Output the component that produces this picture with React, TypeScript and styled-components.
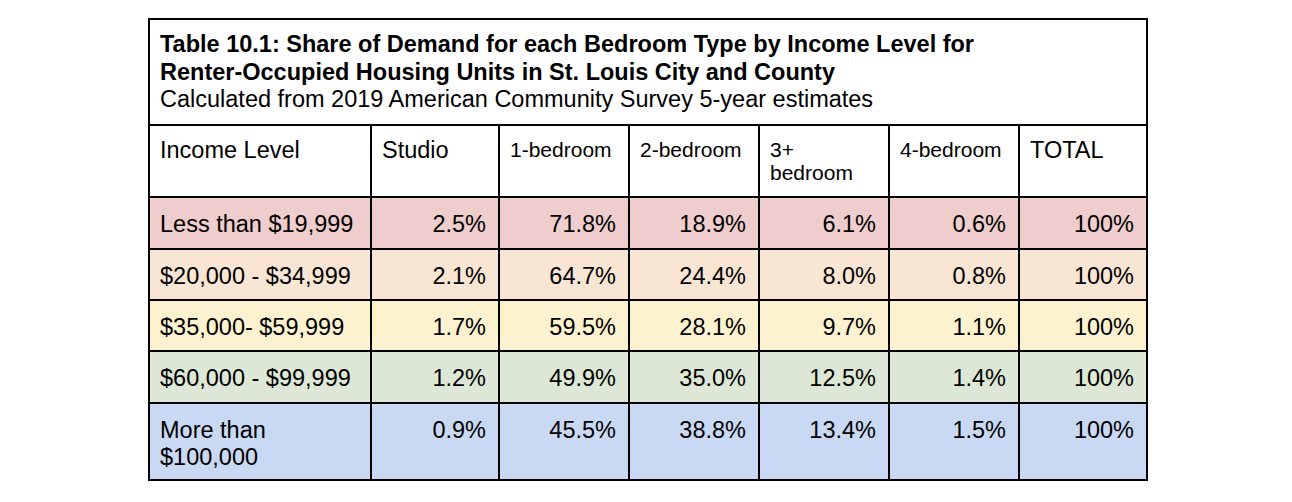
import React from "react";
import styled, { createGlobalStyle } from "styled-components";

const GlobalStyle = createGlobalStyle`
  html, body { margin: 0; padding: 0; background: #ffffff; }
  body { font-family: "Liberation Sans", Arial, sans-serif; color: #000; }
`;

const Page = styled.div`
  padding: 18px 0 0 148px;
`;

const Grid = styled.div`
  display: grid;
  width: 1000px;
  box-sizing: border-box;
  background: #000;
  padding: 2px;
  gap: 2px;
  grid-template-columns: 220px 126px 128px 128px 128px 128px 126px;
  grid-template-rows: 104px 70px 50px 49px 49px 50px 75px;
`;

const TitleCell = styled.div`
  grid-column: 1 / -1;
  background: #fff;
  padding: 11px 10px 0;
  font-size: 23.5px;
  line-height: 27.5px;
`;

const TitleBold = styled.div`
  font-weight: bold;
`;

const HeadCell = styled.div<{ $small?: boolean }>`
  background: #fff;
  font-size: ${(p) => (p.$small ? 21 : 23.5)}px;
  line-height: ${(p) => (p.$small ? 23 : 27)}px;
  padding: ${(p) => (p.$small ? 12 : 11)}px 12px 0 10px;
`;

const Cell = styled.div<{ $bg: string; $align?: "left" | "right" }>`
  background: ${(p) => p.$bg};
  text-align: ${(p) => p.$align ?? "left"};
  font-size: 23.5px;
  line-height: 27px;
  padding: 13px 12px 0 10px;
`;

const headers: { label: React.ReactNode; small?: boolean }[] = [
  { label: "Income Level" },
  { label: "Studio" },
  { label: "1-bedroom", small: true },
  { label: "2-bedroom", small: true },
  { label: <>3+<br />bedroom</>, small: true },
  { label: "4-bedroom", small: true },
  { label: "TOTAL" },
];

const rows: { label: React.ReactNode; bg: string; values: string[] }[] = [
  { label: "Less than $19,999", bg: "#eecdcc", values: ["2.5%", "71.8%", "18.9%", "6.1%", "0.6%", "100%"] },
  { label: "$20,000 - $34,999", bg: "#f9e5d3", values: ["2.1%", "64.7%", "24.4%", "8.0%", "0.8%", "100%"] },
  { label: "$35,000- $59,999", bg: "#fdf2cf", values: ["1.7%", "59.5%", "28.1%", "9.7%", "1.1%", "100%"] },
  { label: "$60,000 - $99,999", bg: "#dce8d5", values: ["1.2%", "49.9%", "35.0%", "12.5%", "1.4%", "100%"] },
  { label: <>More than<br />$100,000</>, bg: "#c9d9f4", values: ["0.9%", "45.5%", "38.8%", "13.4%", "1.5%", "100%"] },
];

export default function App() {
  return (
    <Page>
      <GlobalStyle />
      <Grid>
        <TitleCell>
          <TitleBold>Table 10.1: Share of Demand for each Bedroom Type by Income Level for</TitleBold>
          <TitleBold>Renter-Occupied Housing Units in St. Louis City and County</TitleBold>
          <div>Calculated from 2019 American Community Survey 5-year estimates</div>
        </TitleCell>
        {headers.map((h, i) => (
          <HeadCell key={`h${i}`} $small={h.small}>
            {h.label}
          </HeadCell>
        ))}
        {rows.map((r, ri) => (
          <React.Fragment key={`r${ri}`}>
            <Cell $bg={r.bg}>{r.label}</Cell>
            {r.values.map((v, vi) => (
              <Cell key={vi} $bg={r.bg} $align="right">
                {v}
              </Cell>
            ))}
          </React.Fragment>
        ))}
      </Grid>
    </Page>
  );
}
